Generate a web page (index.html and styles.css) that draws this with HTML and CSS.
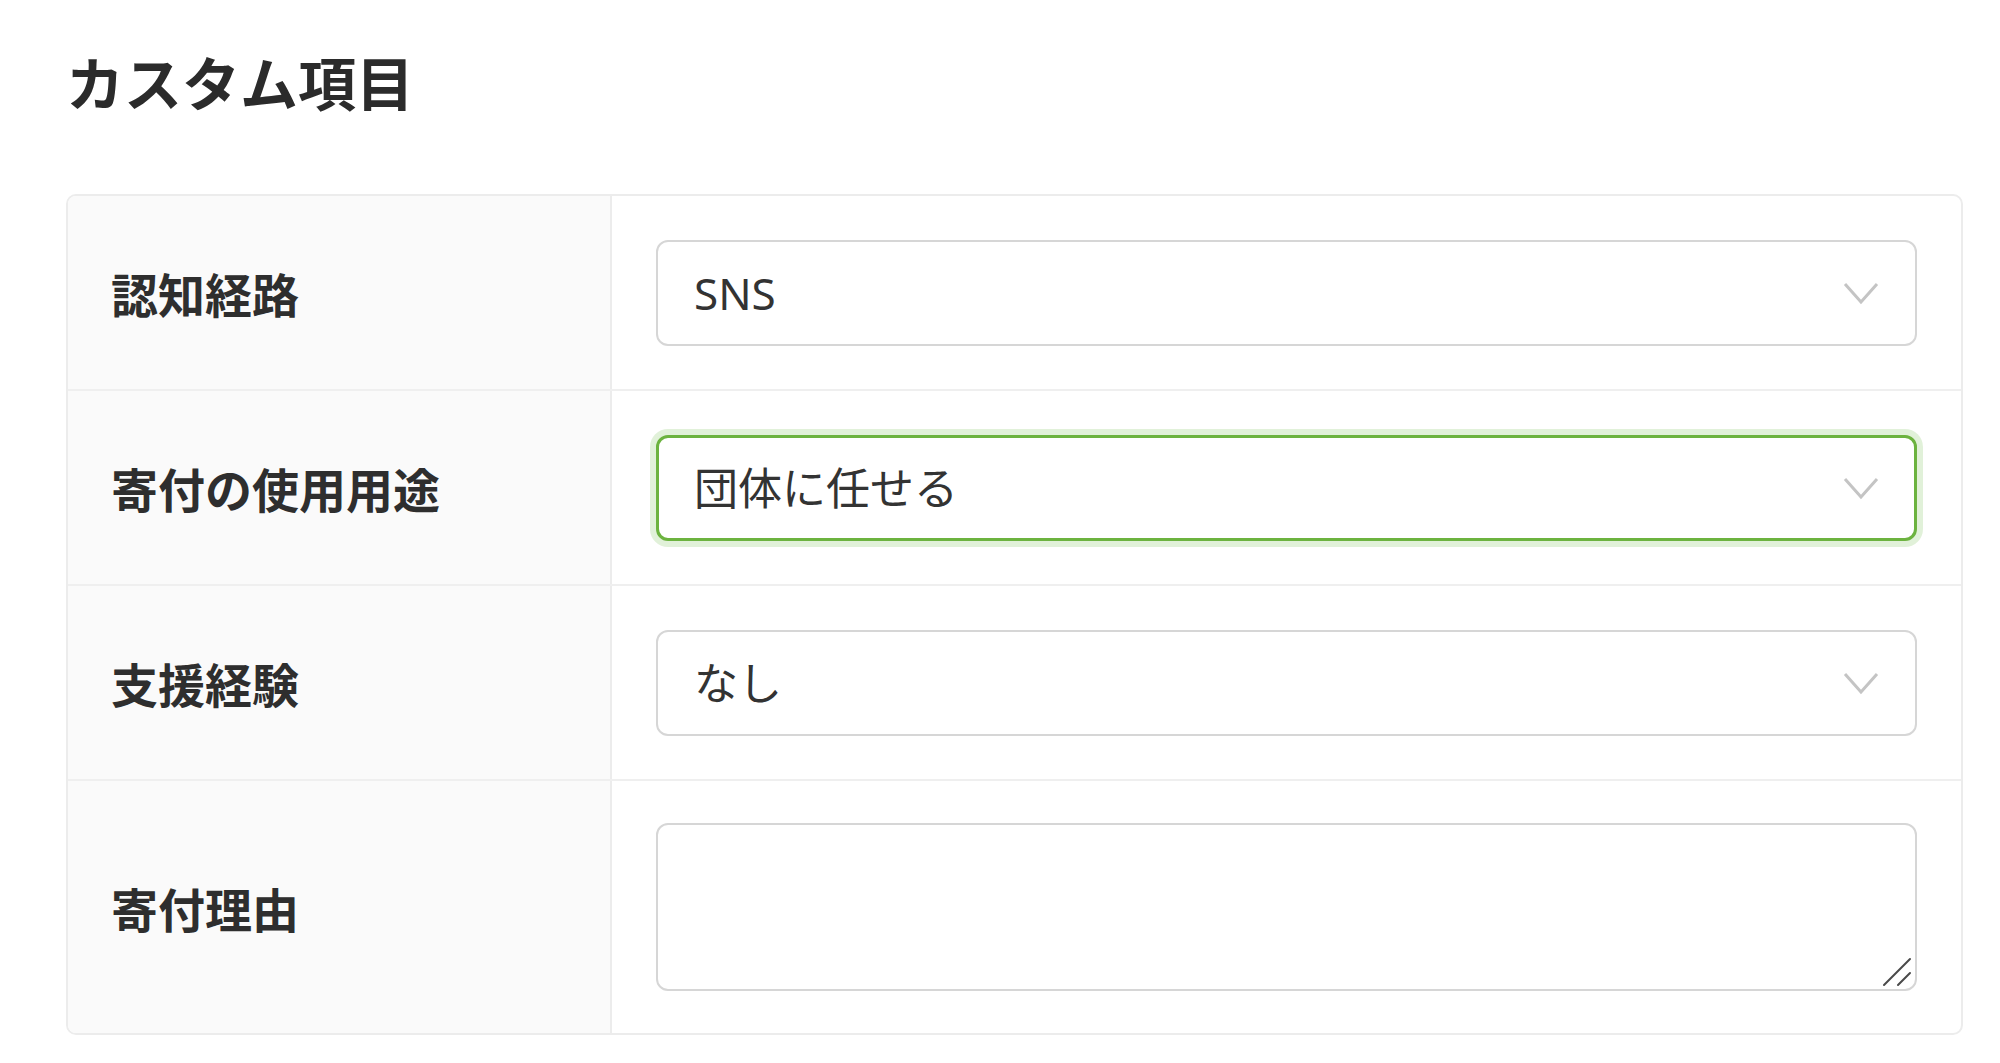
FILE: index.html
```html
<!DOCTYPE html>
<html lang="ja">
<head>
<meta charset="utf-8">
<title>カスタム項目</title>
<link rel="stylesheet" href="styles.css">
</head>
<body>
<main class="page">
  <h1 class="page-title">カスタム項目</h1>
  <section class="card">
    <div class="row">
      <div class="row-label">認知経路</div>
      <div class="row-field">
        <div class="select-wrap">
          <select class="select"><option>SNS</option></select>
          <svg class="chevron" viewBox="0 0 36 24" aria-hidden="true"><path d="M2 3 L18 21 L34 3" fill="none" stroke="#c4c4c4" stroke-width="3"/></svg>
        </div>
      </div>
    </div>
    <div class="row">
      <div class="row-label">寄付の使用用途</div>
      <div class="row-field">
        <div class="select-wrap">
          <select class="select is-focused"><option>団体に任せる</option></select>
          <svg class="chevron" viewBox="0 0 36 24" aria-hidden="true"><path d="M2 3 L18 21 L34 3" fill="none" stroke="#c4c4c4" stroke-width="3"/></svg>
        </div>
      </div>
    </div>
    <div class="row">
      <div class="row-label">支援経験</div>
      <div class="row-field">
        <div class="select-wrap">
          <select class="select"><option>なし</option></select>
          <svg class="chevron" viewBox="0 0 36 24" aria-hidden="true"><path d="M2 3 L18 21 L34 3" fill="none" stroke="#c4c4c4" stroke-width="3"/></svg>
        </div>
      </div>
    </div>
    <div class="row">
      <div class="row-label">寄付理由</div>
      <div class="row-field row-field-tall">
        <div class="textarea-wrap">
          <textarea class="textarea"></textarea>
          <svg class="grip" viewBox="0 0 30 30" aria-hidden="true"><path d="M2 28 L28 2 M16 28 L28 16" fill="none" stroke="#4a4a4a" stroke-width="2" stroke-linecap="round"/></svg>
        </div>
      </div>
    </div>
  </section>
</main>
</body>
</html>
```

FILE: styles.css
```css
* {
  box-sizing: border-box;
}

html, body {
  margin: 0;
  background: #ffffff;
}

body {
  font-family: "Noto Sans", "Noto Sans CJK JP", sans-serif;
  color: #2e2e2e;
}

.page {
  padding: 52px 37px 0 66px;
}

.page-title {
  margin: 0 0 84px 0;
  font-size: 58px;
  line-height: 1;
  font-weight: 700;
  color: #2b2b2b;
  font-family: "Noto Sans CJK JP", sans-serif;
}

.card {
  border: 2px solid #ececec;
  border-radius: 10px;
  overflow: hidden;
  background: #ffffff;
}

.row {
  display: grid;
  grid-template-columns: 544px 1fr;
  border-top: 2px solid #efefef;
}

.row:first-child {
  border-top: none;
}

.row-label {
  display: flex;
  align-items: center;
  padding-left: 43px;
  background: #fafafa;
  border-right: 2px solid #ececec;
  font-family: "Noto Sans CJK JP", sans-serif;
  font-size: 47px;
  font-weight: 700;
  color: #2e2e2e;
}

.row-field {
  padding: 44px 44px 43px 44px;
}

.row-field-tall {
  padding-top: 42px;
  padding-bottom: 42px;
}

.select-wrap,
.textarea-wrap {
  position: relative;
}

.select {
  display: block;
  width: 100%;
  height: 106px;
  appearance: none;
  -webkit-appearance: none;
  background: #ffffff;
  border: 2px solid #d6d6d6;
  border-radius: 12px;
  padding: 0 90px 0 36px;
  font-family: "Noto Sans", "Noto Sans CJK JP", sans-serif;
  font-size: 44px;
  color: #333333;
  outline: none;
}

.select.is-focused {
  border: 3px solid #6cb33f;
  padding-left: 35px;
  box-shadow: 0 0 0 6px rgba(120, 190, 80, 0.22);
}

.chevron {
  position: absolute;
  right: 38px;
  top: 50%;
  width: 36px;
  height: 24px;
  margin-top: -12px;
  pointer-events: none;
}

.textarea {
  display: block;
  width: 100%;
  height: 168px;
  border: 2px solid #d6d6d6;
  border-radius: 12px;
  background: #ffffff;
  padding: 20px 36px;
  font-family: "Noto Sans", "Noto Sans CJK JP", sans-serif;
  font-size: 44px;
  color: #333333;
  resize: none;
  outline: none;
}

.grip {
  position: absolute;
  right: 5px;
  bottom: 4px;
  width: 30px;
  height: 30px;
  pointer-events: none;
}
```
